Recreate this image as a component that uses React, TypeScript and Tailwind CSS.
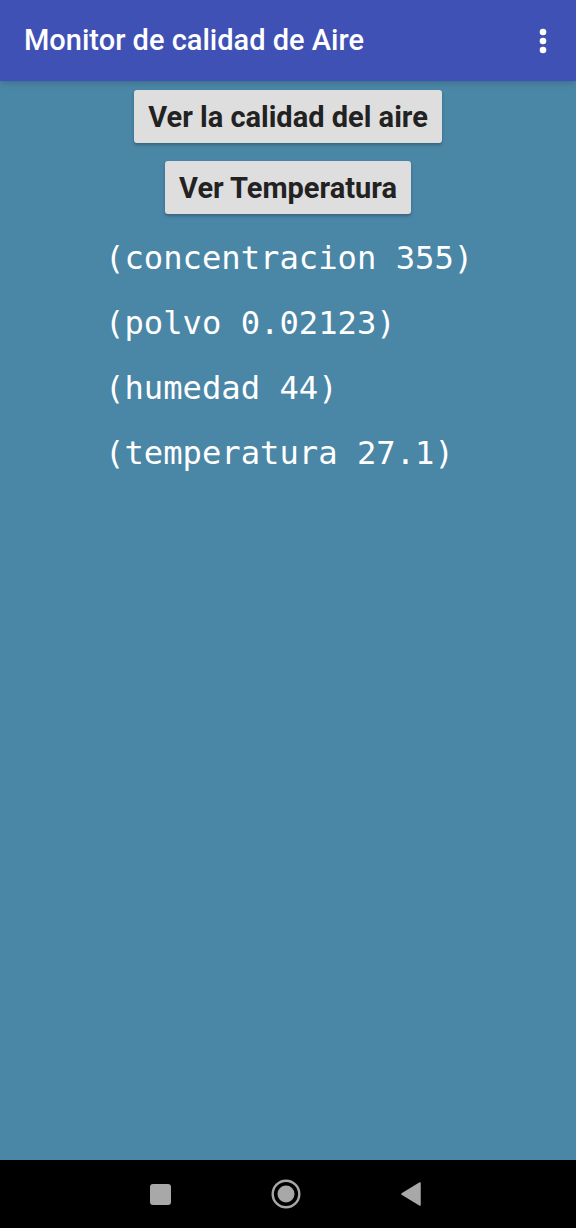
import React from "react";

const readings = [
  "(concentracion 355)",
  "(polvo 0.02123)",
  "(humedad 44)",
  "(temperatura 27.1)",
];

export default function App() {
  return (
    <div className="w-[576px] h-[1228px] flex flex-col bg-[#4a86a6] font-['Roboto',sans-serif]">
      <header className="h-[81px] shrink-0 bg-[#3f51b5] flex items-center justify-between pl-[24px] pr-[29px] shadow-md">
        <h1 className="text-white text-[29px] font-medium leading-none">
          Monitor de calidad de Aire
        </h1>
        <svg width="8" height="26" viewBox="0 0 8 26" className="text-white">
          <circle cx="4" cy="4" r="3.3" fill="currentColor" />
          <circle cx="4" cy="13" r="3.3" fill="currentColor" />
          <circle cx="4" cy="22" r="3.3" fill="currentColor" />
        </svg>
      </header>

      <main className="flex-1 flex flex-col items-center pt-[9px]">
        <button className="h-[53px] px-[14px] pt-[2px] bg-[#dedede] text-[#222] font-bold text-[29px] rounded-[3px] shadow-[0_2px_3px_rgba(0,0,0,0.25)]">
          Ver la calidad del aire
        </button>
        <button className="mt-[18px] h-[53px] px-[14px] pt-[2px] bg-[#dedede] text-[#222] font-bold text-[29px] rounded-[3px] shadow-[0_2px_3px_rgba(0,0,0,0.25)]">
          Ver Temperatura
        </button>
        <div className="self-start pl-[105px] mt-[18px] flex flex-col gap-[13px] font-['DejaVu_Sans_Mono',monospace] text-[32.2px] leading-[52px] text-white">
          {readings.map((r) => (
            <div key={r}>{r}</div>
          ))}
        </div>
      </main>

      <nav className="h-[68px] shrink-0 bg-black flex items-center justify-center gap-[100px] pr-[5px]">
        <div className="w-[21px] h-[21px] rounded-[3px] bg-[#a8a8a8]" />
        <svg width="30" height="30" viewBox="0 0 30 30">
          <circle cx="15" cy="15" r="13.3" fill="none" stroke="#a8a8a8" strokeWidth="2.4" />
          <circle cx="15" cy="15" r="8.5" fill="#a8a8a8" />
        </svg>
        <svg width="20" height="24" viewBox="0 0 20 24">
          <path d="M19 1 L1 12 L19 23 Z" fill="#a8a8a8" strokeLinejoin="round" stroke="#a8a8a8" strokeWidth="1.5" />
        </svg>
      </nav>
    </div>
  );
}
